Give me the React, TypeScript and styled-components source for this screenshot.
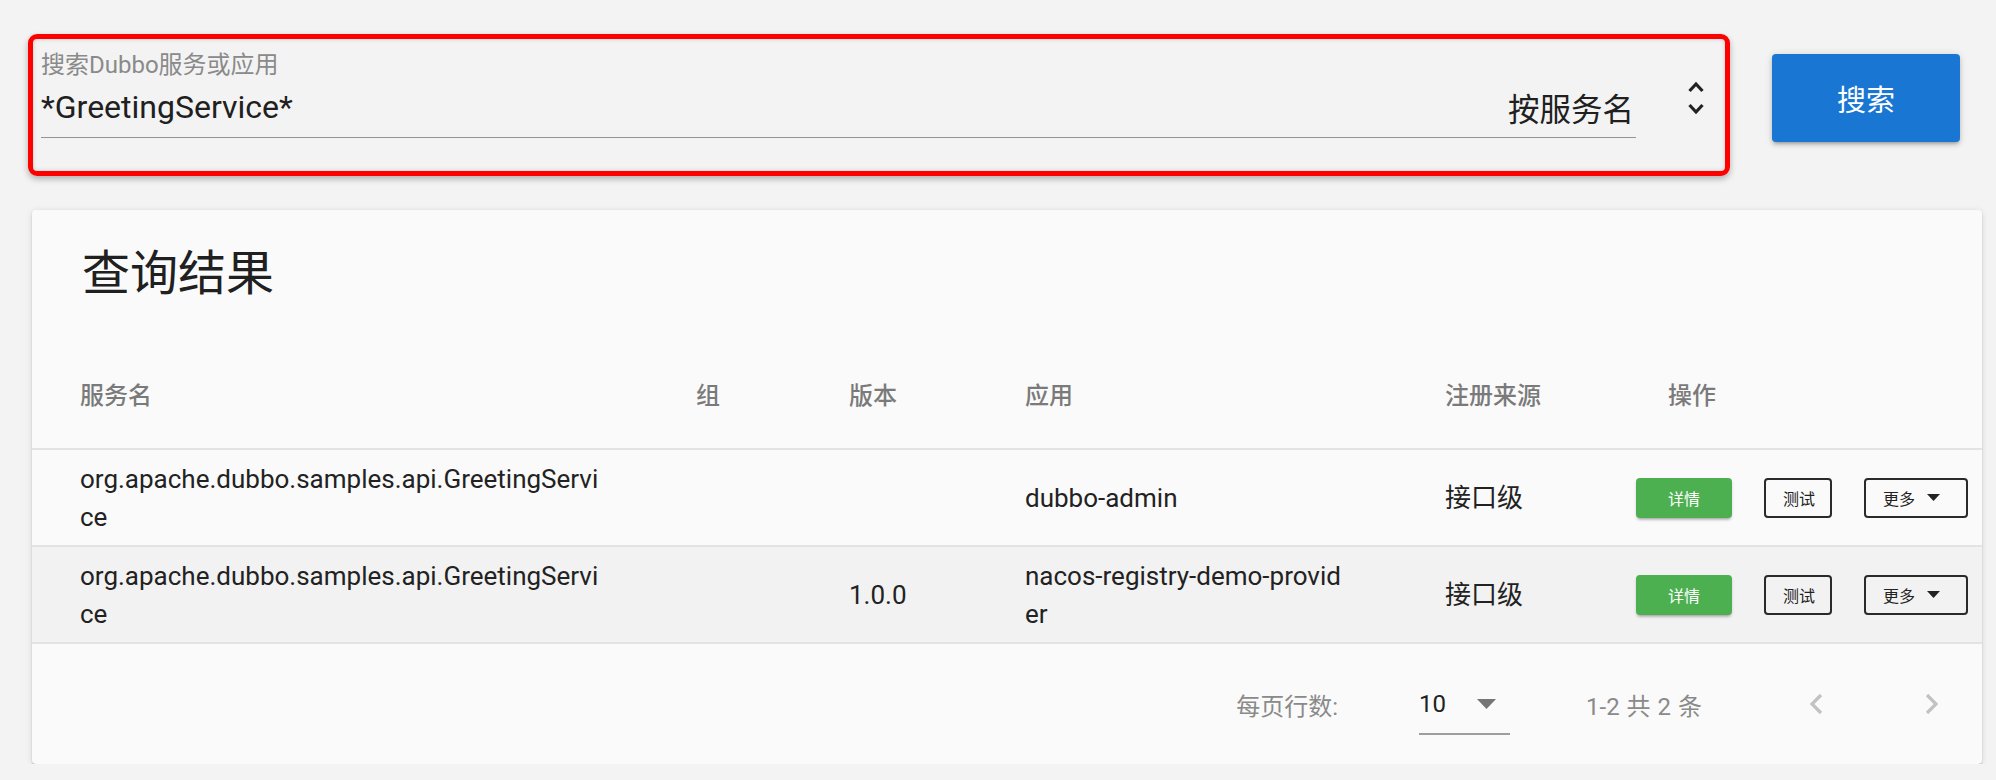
import React from "react";
import styled, { createGlobalStyle } from "styled-components";

const GlobalStyle = createGlobalStyle`
  html, body {
    margin: 0;
    padding: 0;
    background: #f3f3f3;
  }
  body {
    font-family: Roboto, "Noto Sans CJK SC", sans-serif;
    color: rgba(0, 0, 0, 0.87);
  }
`;

const Page = styled.div`
  width: 1996px;
  box-sizing: border-box;
  padding: 34px 14px 0 28px;
`;

const SearchBar = styled.div`
  display: flex;
  align-items: flex-start;
  height: 142px;
`;

const Highlight = styled.div`
  width: 1702px;
  height: 142px;
  box-sizing: border-box;
  border: 5px solid #ff0000;
  border-radius: 9px;
  box-shadow: 0 3px 6px rgba(0, 0, 0, 0.28), inset 0 0 4px rgba(0, 0, 0, 0.18);
  display: flex;
  padding-left: 8px;
`;

const Field = styled.div`
  flex: 1;
  display: flex;
  flex-direction: column;
  padding-top: 13px;
`;

const Label = styled.div`
  font-size: 24px;
  line-height: 26px;
  color: #8a8a8a;
`;

const InputRow = styled.div`
  margin-top: 11px;
  height: 36px;
  padding-bottom: 12px;
  display: flex;
  align-items: center;
  justify-content: space-between;
  border-bottom: 1px solid #949494;
`;

const InputText = styled.span`
  font-size: 32px;
  color: #202020;
`;

const SelectValue = styled.span`
  font-size: 31.5px;
  color: #202020;
  margin-right: 2px;
`;

const Spinner = styled.div`
  width: 89px;
  box-sizing: border-box;
  padding-left: 51px;
  margin-top: 41px;
`;

const SearchButton = styled.button`
  margin: 20px 0 0 42px;
  width: 188px;
  height: 88px;
  border: none;
  border-radius: 4px;
  background: #1976d2;
  color: #fff;
  font-family: inherit;
  font-size: 29px;
  box-shadow: 0 3px 3px -2px rgba(0, 0, 0, 0.2), 0 3px 4px rgba(0, 0, 0, 0.14),
    0 1px 8px rgba(0, 0, 0, 0.12);
`;

const Card = styled.div`
  margin: 34px 0 0 4px;
  width: 1950px;
  background: #fafafa;
  border-radius: 4px;
  box-shadow: 0 3px 2px -2px rgba(0, 0, 0, 0.2), 0 2px 2px rgba(0, 0, 0, 0.14),
    0 1px 6px rgba(0, 0, 0, 0.12);
  overflow: hidden;
`;

const Title = styled.div`
  padding: 32px 50px;
  font-size: 48px;
  line-height: 64px;
  color: #202020;
`;

const columns = "616px 153px 176px 420px 223px 362px";

const HeadRow = styled.div`
  display: grid;
  grid-template-columns: ${columns};
  align-items: center;
  height: 110px;
  border-bottom: 2px solid #e3e3e3;
`;

const HeadCell = styled.div`
  padding: 0 48px;
  font-size: 24px;
  font-weight: 500;
  color: #7a7a7a;
`;

const Row = styled.div<{ $shade?: boolean }>`
  display: grid;
  grid-template-columns: ${columns};
  align-items: center;
  height: 95px;
  border-bottom: 2px solid #e3e3e3;
  background: ${(p) => (p.$shade ? "#f2f2f2" : "transparent")};
`;

const Cell = styled.div`
  padding: 0 48px;
  font-size: 26px;
  line-height: 38px;
  color: #222;
  word-break: break-all;

  &:first-child {
    padding-right: 42px;
  }
`;

const Actions = styled.div`
  display: flex;
  align-items: center;
  gap: 32px;
  padding-left: 16px;
`;

const DetailButton = styled.button`
  width: 96px;
  height: 40px;
  border: none;
  border-radius: 4px;
  background: #4caf50;
  color: #fff;
  font-family: inherit;
  font-size: 16px;
  box-shadow: 0 3px 3px -2px rgba(0, 0, 0, 0.25), 0 2px 3px rgba(0, 0, 0, 0.14);
`;

const OutlineButton = styled.button<{ $w: number }>`
  width: ${(p) => p.$w}px;
  height: 40px;
  box-sizing: border-box;
  border: 2px solid #2a2a2a;
  border-radius: 4px;
  background: transparent;
  color: #222;
  font-family: inherit;
  font-size: 16px;
  display: flex;
  align-items: center;
  padding: 0 0 0 17px;
  gap: 12px;
`;

const Footer = styled.div`
  display: flex;
  justify-content: flex-end;
  align-items: center;
  height: 120px;
  padding-right: 30px;
  font-size: 24px;
  color: #8a8a8a;
`;

const PerPage = styled.div`
  margin-right: 81px;
`;

const PageSelect = styled.div`
  width: 91px;
  height: 60px;
  box-sizing: border-box;
  border-bottom: 2px solid #9e9e9e;
  margin-top: 2px;
  display: flex;
  align-items: center;
  justify-content: space-between;
  padding-right: 14px;
  color: #222;
  margin-right: 76px;
`;

const Range = styled.div`
  margin-right: 94px;
  word-spacing: 1px;
`;

const NavButton = styled.div<{ $gap?: number }>`
  width: 40px;
  height: 40px;
  display: flex;
  align-items: center;
  justify-content: center;
  margin-left: ${(p) => p.$gap ?? 0}px;
`;

const Chevron = ({ dir }: { dir: "left" | "right" }) => (
  <svg width="20" height="22" viewBox="0 0 20 22">
    <polyline
      points={dir === "left" ? "15,2 6,11 15,20" : "5,2 14,11 5,20"}
      fill="none"
      stroke="#c2c2c2"
      strokeWidth="3.2"
    />
  </svg>
);

const Caret = ({ w, h, color }: { w: number; h: number; color: string }) => (
  <svg width={w} height={h} viewBox={`0 0 ${w} ${h}`}>
    <polygon points={`0,0 ${w},0 ${w / 2},${h}`} fill={color} />
  </svg>
);

const UpDown = () => (
  <svg width="18" height="36" viewBox="0 0 18 36">
    <polyline points="2.5,11 9,4 15.5,11" fill="none" stroke="#222" strokeWidth="3.2" />
    <polyline points="2.5,25 9,32 15.5,25" fill="none" stroke="#222" strokeWidth="3.2" />
  </svg>
);

const services = [
  { name: "org.apache.dubbo.samples.api.GreetingService", group: "", version: "", app: "dubbo-admin", source: "接口级" },
  {
    name: "org.apache.dubbo.samples.api.GreetingService",
    group: "",
    version: "1.0.0",
    app: "nacos-registry-demo-provider",
    source: "接口级",
  },
];

export default function App() {
  return (
    <>
      <GlobalStyle />
      <Page>
        <SearchBar>
          <Highlight>
            <Field>
              <Label>搜索Dubbo服务或应用</Label>
              <InputRow>
                <InputText>*GreetingService*</InputText>
                <SelectValue>按服务名</SelectValue>
              </InputRow>
            </Field>
            <Spinner>
              <UpDown />
            </Spinner>
          </Highlight>
          <SearchButton>搜索</SearchButton>
        </SearchBar>

        <Card>
          <Title>查询结果</Title>
          <HeadRow>
            <HeadCell>服务名</HeadCell>
            <HeadCell>组</HeadCell>
            <HeadCell>版本</HeadCell>
            <HeadCell>应用</HeadCell>
            <HeadCell>注册来源</HeadCell>
            <HeadCell>操作</HeadCell>
          </HeadRow>
          {services.map((s, i) => (
            <Row key={i} $shade={i % 2 === 1}>
              <Cell>{s.name}</Cell>
              <Cell>{s.group}</Cell>
              <Cell>{s.version}</Cell>
              <Cell>{s.app}</Cell>
              <Cell>{s.source}</Cell>
              <Actions>
                <DetailButton>详情</DetailButton>
                <OutlineButton $w={68}>测试</OutlineButton>
                <OutlineButton $w={104}>
                  更多
                  <Caret w={13} h={7} color="#222" />
                </OutlineButton>
              </Actions>
            </Row>
          ))}
          <Footer>
            <PerPage>每页行数:</PerPage>
            <PageSelect>
              10
              <Caret w={19} h={10} color="#757575" />
            </PageSelect>
            <Range>1-2 共 2 条</Range>
            <NavButton>
              <Chevron dir="left" />
            </NavButton>
            <NavButton $gap={76}>
              <Chevron dir="right" />
            </NavButton>
          </Footer>
        </Card>
      </Page>
    </>
  );
}
